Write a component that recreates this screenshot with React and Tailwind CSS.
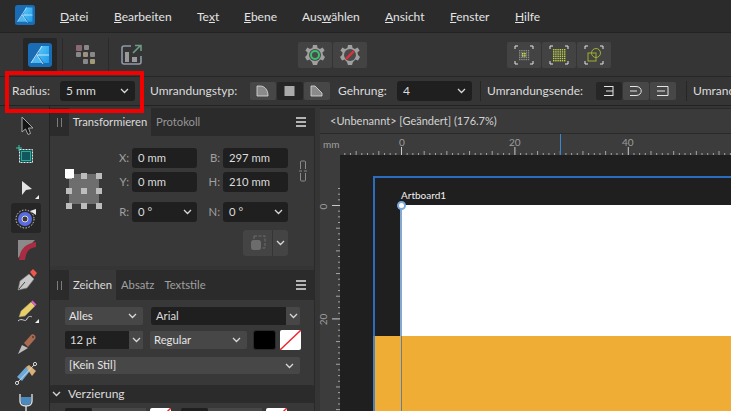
import React from "react";

const Chevron = ({ className = "" }) => (
  <svg width="9" height="6" viewBox="0 0 9 6" className={`shrink-0 ${className}`}>
    <path d="M1 1 L4.5 4.5 L8 1" fill="none" stroke="#d8d8d8" strokeWidth="1.3" />
  </svg>
);

const Logo = ({ size }) => (
  <svg width={size} height={size} viewBox="0 0 24 24">
    <defs>
      <linearGradient id="lg" x1="0" y1="0" x2="1" y2="1">
        <stop offset="0" stopColor="#5cc8f8" />
        <stop offset="1" stopColor="#1f9be8" />
      </linearGradient>
    </defs>
    <rect width="24" height="24" rx="3" fill="#1a6cb4" />
    <path d="M13 3 H21 V20 H16 L10 12 Z" fill="url(#lg)" />
    <path d="M3 20 L9 12 L14 20 Z" fill="#4db8f2" />
    <path d="M3 20 L14 3 M9 12 L21 12 M9 12 L15 21" stroke="#cfeeff" strokeWidth="0.9" fill="none" />
  </svg>
);

const Select = ({ label, className = "" }) => (
  <div className={`flex shrink-0 items-center justify-between rounded-[3px] bg-[#1f1f1f] pl-[6px] pr-[6px] text-[#dcdcdc] ${className}`}>
    <span>{label}</span>
    <Chevron />
  </div>
);

const GreySelect = ({ label, className = "" }) => (
  <div className={`flex shrink-0 items-center justify-between rounded-[2px] bg-[#474747] pl-[4px] pr-[6px] text-[#e6e6e6] ${className}`}>
    <span>{label}</span>
    <Chevron />
  </div>
);

const Gear = ({ children }) => (
  <svg width="22" height="22" viewBox="0 0 22 22">
    <path d="M9 1 H13 L13.6 4 L16 5 L18.6 3.4 L20.6 6.4 L18.4 8.4 L19 11 L21 13 L19 16.4 L16.4 15.6 L14 18 L13 21 H9 L8 18 L5.6 15.6 L3 16.4 L1 13 L3 11 L3.6 8.4 L1.4 6.4 L3.4 3.4 L6 5 L8.4 4 Z" fill="#a0a0a0" />
    <circle cx="11" cy="11" r="6" fill="#4a4a4a" />
    {children}
  </svg>
);

const Frame = ({ children }) => (
  <svg width="20" height="20" viewBox="0 0 20 20">
    <path d="M1 4 V1 H4 M16 1 H19 V4 M19 16 V19 H16 M4 19 H1 V16" fill="none" stroke="#e6e6e6" strokeWidth="1" />
    {children}
  </svg>
);

const dots = (n, start, step, color) => {
  const out = [];
  for (let i = 0; i < n; i++) {
    for (let j = 0; j < n; j++) {
      out.push(<rect key={i + "-" + j} x={start + i * step} y={start + j * step} width="1.4" height="1.4" fill={color} />);
    }
  }
  return out;
};

const ToolButton = ({ children, active }) => (
  <div className={`mb-px flex h-[30px] w-[30px] items-center justify-center rounded-[3px] ${active ? "bg-[#262626]" : ""}`}>
    <svg width="30" height="30" viewBox="0 0 30 30">{children}</svg>
  </div>
);

const Corner = () => <path d="M24 27 L28 23 V27 Z" fill="#f0f0f0" />;

const Tools = () => (
  <div className="w-[50px] shrink-0 border-r border-[#232323] pl-[11px] pt-[4px]">
    <ToolButton>
      <path d="M11 7 L11 22 L14.5 19 L17 24.5 L19.5 23.5 L17.5 18 L22 18 Z" fill="#141414" stroke="#a8a8a8" strokeWidth="1" />
    </ToolButton>
    <ToolButton>
      <rect x="8.5" y="8.5" width="13" height="13" fill="#11585c" stroke="#e8e8e8" strokeDasharray="2 1" />
      <rect x="10.5" y="10.5" width="9" height="9" fill="none" stroke="#36a89a" />
      <path d="M8 4 V10 M5 7 H11" stroke="#38c8a8" strokeWidth="1" />
    </ToolButton>
    <ToolButton>
      <path d="M11 9 L21 17 L15 18 L11 23 Z" fill="#e4e4e4" />
      <Corner />
    </ToolButton>
    <ToolButton active>
      <circle cx="14" cy="16" r="9" fill="none" stroke="#d8d8d8" strokeDasharray="1.5 1.5" />
      <circle cx="14" cy="16" r="7" fill="#5a6be0" />
      <circle cx="14" cy="16" r="3" fill="#3a3a3a" stroke="#d8d8d8" />
      <path d="M19 8 L25 6 V12 Z" fill="#e8e8e8" />
    </ToolButton>
    <ToolButton>
      <path d="M7 6 H24 L7 24 Z" fill="#8a8a8a" />
      <path d="M8 26 C9 15 14 10 25 8 V13 C18 14 15 18 14 26 Z" fill="#a82c42" />
    </ToolButton>
    <ToolButton>
      <path d="M7 25 L9 16 L18 9 L23 14 L16 23 Z" fill="#c8c8c8" stroke="#808080" strokeWidth="0.6" />
      <path d="M8 24 L14 17" stroke="#444" strokeWidth="1" />
      <path d="M19 7 L22 4 L26 8 L23 12 Z" fill="#f0574a" />
    </ToolButton>
    <ToolButton>
      <path d="M8 21 L10 15 L20 6 L24 10 L14 20 Z" fill="#e8cf6a" stroke="#8c8c70" strokeWidth="0.5" />
      <path d="M20 6 L21.5 4.5 L25.5 8.5 L24 10 Z" fill="#e060c8" />
      <path d="M7 25 C11 21 14 27 16 23 C17 20 20 20 21 21" fill="none" stroke="#d0d0d0" strokeWidth="1" />
      <Corner />
    </ToolButton>
    <ToolButton>
      <path d="M7 27 L11 18 L17 21 Z" fill="#bcbcbc" />
      <path d="M13 16 L20 8 C22 6 26 9 24 12 L17 20 Z" fill="#a86a50" />
      <circle cx="22" cy="10" r="1" fill="#5a3a2c" />
    </ToolButton>
    <ToolButton>
      <path d="M6 19 L15 9 L19 13 L11 23 Z" fill="#6aa8d8" />
      <path d="M15 9 L18 7 L25 13 L21 18 Z" fill="#d8b078" />
      <path d="M6 25 L24 6" stroke="#d8d8d8" strokeWidth="1" />
      <circle cx="6" cy="25" r="1.6" fill="#333" stroke="#d8d8d8" />
      <circle cx="24" cy="6" r="1.6" fill="#333" stroke="#d8d8d8" />
    </ToolButton>
    <ToolButton>
      <path d="M9 5 V12 C9 16 12 17 15 17 C18 17 21 16 21 12 V5" fill="none" stroke="#dcdcdc" strokeWidth="1.4" />
      <path d="M10 8 H20 V12 C20 15 18 16 15 16 C12 16 10 15 10 12 Z" fill="#4a88c0" />
      <path d="M15 17 V26" stroke="#dcdcdc" strokeWidth="1.4" />
    </ToolButton>
  </div>
);

const Grip = () => <span className="ml-[7px] mr-[7px] h-[9px] w-[5px] shrink-0 border-x border-[#7c7c7c]" />;

const Burger = () => (
  <div className="ml-auto mr-[8px] flex w-[10px] flex-col gap-[2px]">
    <span className="h-[2px] bg-[#b4b4b4]" />
    <span className="h-[2px] bg-[#b4b4b4]" />
    <span className="h-[2px] bg-[#b4b4b4]" />
  </div>
);

const Field = ({ label, value, chevron }) => (
  <div className="flex items-center">
    <span className="w-[22px] pr-[3px] text-right text-[#a0a0a0]">{label}</span>
    <div className="flex h-[20px] w-[65px] items-center justify-between rounded-[3px] bg-[#1f1f1f] pl-[6px] pr-[5px] text-[#dcdcdc]">
      <span>{value}</span>
      {chevron && <Chevron />}
    </div>
  </div>
);

const AnchorGrid = () => (
  <svg width="40" height="40" viewBox="0 0 40 40">
    <rect x="4" y="5" width="30" height="30" fill="#6e6e6e" />
    {[4, 19, 34].map((y) =>
      [4, 19, 34].map((x) => <rect key={x + "-" + y} x={x - 3} y={y} width="6" height="6" fill="#bdbdbd" />)
    )}
    <rect x="0" y="0" width="9" height="9" fill="#ffffff" />
  </svg>
);

const TransformPanel = () => (
  <div className="h-[158px] bg-[#383838]">
    <div className="flex h-[28px] items-center bg-[#2b2b2b]">
      <Grip />
      <div className="flex h-full w-[82px] items-center justify-center bg-[#383838] text-[#dcdcdc]">Transformieren</div>
      <span className="ml-[5px] text-[#969696]">Protokoll</span>
      <Burger />
    </div>
    <div className="relative flex pl-[15px] pt-[12px]">
      <div className="mt-[21px] w-[45px]">
        <AnchorGrid />
      </div>
      <div className="flex flex-col">
        <div className="flex gap-[4px]"><Field label="X:" value="0 mm" /><Field label="B:" value="297 mm" /></div>
        <div className="mt-[4px] flex gap-[4px]"><Field label="Y:" value="0 mm" /><Field label="H:" value="210 mm" /></div>
        <div className="mt-[10px] flex gap-[4px]"><Field label="R:" value="0 °" chevron /><Field label="N:" value="0 °" chevron /></div>
        <div className="ml-[133px] mt-[8px] flex h-[26px] w-[45px] overflow-hidden rounded-[3px] bg-[#444444]">
          <div className="flex w-[30px] items-center justify-center border-r border-[#353535]">
            <svg width="18" height="16" viewBox="0 0 18 16">
              <path d="M5 1 H16 V13 H13 M5 1 V4" fill="none" stroke="#6c6c6c" strokeDasharray="3 1.5" />
              <rect x="2" y="5" width="10" height="10" rx="2.5" fill="#6c6c6c" />
            </svg>
          </div>
          <div className="flex flex-1 items-center justify-center"><Chevron /></div>
        </div>
      </div>
      <svg width="8" height="22" viewBox="0 0 8 22" className="ml-[11px] mt-[12px]">
        <path d="M1.5 9 V2 Q1.5 1 2.5 1 H5.5 Q6.5 1 6.5 2 V9 M1.5 13 V20 Q1.5 21 2.5 21 H5.5 Q6.5 21 6.5 20 V13 M0 11 H3 M5 11 H8" fill="none" stroke="#8a8a8a" />
      </svg>
    </div>
  </div>
);

const NoFill = ({ className = "" }) => (
  <svg viewBox="0 0 21 20" className={`shrink-0 ${className}`}>
    <rect width="21" height="20" rx="2" fill="#ffffff" />
    <path d="M0 20 L21 0" stroke="#f0222c" strokeWidth="1.4" />
  </svg>
);

const CharPanel = () => (
  <div className="mt-[4px] bg-[#383838]">
    <div className="flex h-[30px] items-center bg-[#2b2b2b]">
      <Grip />
      <div className="flex h-full w-[47px] items-center justify-center bg-[#383838] text-[#dcdcdc]">Zeichen</div>
      <span className="ml-[5px] text-[#a0a0a0]">Absatz</span>
      <span className="ml-[10px] text-[#a0a0a0]">Textstile</span>
      <Burger />
    </div>
    <div className="pl-[15px] pt-[7px]">
      <div className="flex h-[18px]">
        <GreySelect label="Alles" className="w-[78px]" />
        <div className="ml-[8px] flex w-[135px] items-center rounded-l-[3px] bg-[#1f1f1f] pl-[5px] text-[#dcdcdc]">Arial</div>
        <div className="flex w-[14px] items-center justify-center rounded-r-[2px] bg-[#474747]"><Chevron /></div>
      </div>
      <div className="mt-[5px] flex h-[20px] items-center">
        <div className="flex h-[18px] w-[64px] items-center rounded-l-[2px] bg-[#1f1f1f] pl-[5px] text-[#dcdcdc]">12 pt</div>
        <div className="flex h-[18px] w-[14px] items-center justify-center bg-[#474747]"><Chevron /></div>
        <GreySelect label="Regular" className="ml-[7px] h-[18px] w-[97px]" />
        <div className="ml-[6px] h-[20px] w-[23px] rounded-[3px] border border-[#2a2a2a] bg-black" />
        <NoFill className="ml-[4px] h-[20px] w-[21px]" />
      </div>
      <GreySelect label="[Kein Stil]" className="mt-[7px] h-[17px] w-[235px]" />
    </div>
    <div className="mt-[11px] flex h-[18px] items-center rounded-t-[2px] bg-[#2b2b2b] text-[#dcdcdc]">
      <Chevron className="ml-[2px] mr-[6px]" />
      <span className="ml-[1px] text-[12px]">Verzierung</span>
    </div>
    <div className="flex h-[20px] items-start pl-[15px] pt-[5px]">
      <div className="h-[10px] w-[27px] rounded-t-[2px] bg-[#1f1f1f]" />
      <div className="h-[10px] w-[27px] bg-[#474747]" />
      <div className="h-[10px] w-[27px] bg-[#474747]" />
      <NoFill className="ml-[4px] h-[20px] w-[21px]" />
      <div className="ml-[10px] h-[10px] w-[27px] rounded-t-[2px] bg-[#1f1f1f]" />
      <div className="h-[10px] w-[27px] bg-[#474747]" />
      <div className="h-[10px] w-[27px] bg-[#474747]" />
      <NoFill className="ml-[4px] h-[20px] w-[21px]" />
    </div>
  </div>
);

const mm = 5.67;

const TopRuler = () => {
  const ticks = [];
  for (let i = -10; i < 60; i++) {
    const x = 81 + i * mm;
    const h = i % 20 === 0 ? 8 : i % 4 === 0 ? 4 : 2;
    ticks.push(<rect key={i} x={x} y={21 - h} width="1" height={h} fill={i % 20 === 0 ? "#c8c8c8" : "#a4a4a4"} />);
  }
  return (
    <svg width="411" height="21" viewBox="0 0 411 21" className="block bg-[#3c3c3c]">
      {ticks}
      <rect x="240" y="0" width="1" height="21" fill="#3a86d0" />
    </svg>
  );
};

const LeftRuler = () => {
  const ticks = [];
  for (let i = -3; i < 40; i++) {
    const y = 50 + i * mm;
    const h = i % 20 === 0 ? 8 : i % 4 === 0 ? 4 : 2;
    ticks.push(<rect key={i} x={20 - h} y={y} width={h} height="1" fill={i % 20 === 0 ? "#c8c8c8" : "#a4a4a4"} />);
  }
  return (
    <svg width="20" height="256" viewBox="0 0 20 256" className="block shrink-0 bg-[#3c3c3c]">
      {ticks}
    </svg>
  );
};

const Canvas = () => (
  <div className="flex min-w-0 flex-1 flex-col">
    <div className="mt-[2px] flex h-[26px] items-center border-y border-[#2a2a2a] bg-[#3a3a3a] pl-[10px] text-[11px] text-[#d4d4d4]">
      {"<Unbenannt> [Geändert] (176.7%)"}
    </div>
    <div className="relative h-[21px]">
      <TopRuler />
      <span className="absolute left-[3px] top-[3px] text-[10px] text-[#a0a0a0]">mm</span>
      <span className="absolute left-[79px] top-[1px] text-[10px] text-[#9c9c9c]">0</span>
      <span className="absolute left-[189px] top-[1px] text-[10px] text-[#9c9c9c]">20</span>
      <span className="absolute left-[302px] top-[1px] text-[10px] text-[#9c9c9c]">40</span>
    </div>
    <div className="flex flex-1">
      <div className="relative w-[20px]">
        <LeftRuler />
        <span className="absolute left-[1px] top-[44px] -rotate-90 text-[10px] text-[#9c9c9c]">0</span>
        <span className="absolute left-[-2px] top-[157px] -rotate-90 text-[10px] text-[#9c9c9c]">20</span>
      </div>
      <div className="relative flex-1 overflow-hidden bg-[#1f1f1f]">
        <div className="absolute left-[33px] top-[21px] h-[300px] w-[400px] border-l-2 border-t-2 border-[#2a6cc0]" />
        <div className="absolute left-[34px] top-[181px] h-[80px] w-[400px] bg-[#f0ad35]" />
        <div className="absolute left-[33px] top-[181px] h-[80px] w-[2px] bg-[#4f80b8]" />
        <div className="absolute left-[60px] top-[50px] h-[131px] w-[400px] border-l-2 border-[#85a8d0] bg-white" />
        <div className="absolute left-[61px] top-[181px] h-[80px] w-px bg-[#5f7f9f]" />
        <div className="absolute left-[57px] top-[46px] h-[9px] w-[9px] rounded-full border-2 border-[#7aa8e0] bg-white" />
        <span className="absolute left-[61px] top-[33px] text-[10px] leading-[14px] text-[#f0f0f0]">Artboard1</span>
      </div>
    </div>
  </div>
);

const SegButton = ({ active, children }) => (
  <div className={`flex h-[18px] w-[26px] shrink-0 items-center justify-center rounded-[2px] ${active ? "bg-[#262626]" : "bg-[#474747]"}`}>
    <svg width="14" height="12" viewBox="0 0 14 12">{children}</svg>
  </div>
);

const ActionButton = ({ children }) => (
  <div className="flex h-[26px] w-[34px] items-center justify-center rounded-[2px] bg-[#434343]">{children}</div>
);

export default function App() {
  return (
    <div className="relative h-[411px] w-[731px] overflow-hidden bg-[#353535] text-[11.25px] font-['Lato',sans-serif]">
      {/* Menu */}
      <div className="flex h-[33px] items-center border-b border-[#232323] bg-[#2b2b2b] pt-px text-[12px] text-[#e4e4e4]">
        <div className="ml-[15px] mb-[3px] w-[45px]"><Logo size={20} /></div>
        <span className="w-[54px]"><u>D</u>atei</span>
        <span className="w-[83px]"><u>B</u>earbeiten</span>
        <span className="w-[47px]">Te<u>x</u>t</span>
        <span className="w-[58px]"><u>E</u>bene</span>
        <span className="w-[83px]">Aus<u>w</u>ählen</span>
        <span className="w-[65px]"><u>A</u>nsicht</span>
        <span className="w-[65px]"><u>F</u>enster</span>
        <span><u>H</u>ilfe</span>
      </div>

      {/* Toolbar */}
      <div className="flex h-[44px] items-center border-b border-[#262626]">
        <div className="ml-[23px] flex h-[34px] w-[34px] items-center justify-center rounded-[2px] bg-[#262626]"><Logo size={24} /></div>
        <span className="ml-[5px] h-[34px] w-px bg-[#2a2a2a]" />
        <svg width="22" height="22" viewBox="0 0 22 22" className="ml-[12px]">
          <rect x="1" y="1" width="6" height="6" rx="1" fill="#8a6a70" />
          <rect x="9" y="1" width="5" height="5" rx="1" fill="#888" />
          <rect x="1" y="8" width="5" height="5" rx="1" fill="#888" />
          <rect x="8" y="8" width="5" height="5" rx="1" fill="#a09080" />
          <rect x="15" y="8" width="5" height="5" rx="1" fill="#888" />
          <rect x="8" y="15" width="5" height="5" rx="1" fill="#888" />
          <rect x="15" y="15" width="5" height="5" rx="1" fill="#a09a78" />
        </svg>
        <span className="ml-[11px] h-[34px] w-px bg-[#2a2a2a]" />
        <svg width="22" height="22" viewBox="0 0 22 22" className="ml-[12px]">
          <path d="M10 2 H3 Q1 2 1 4 V18 Q1 20 3 20 H18 Q20 20 20 18 V12" fill="none" stroke="#9098a8" strokeWidth="1.6" />
          <rect x="4" y="8" width="4" height="10" fill="#9a9a9a" />
          <rect x="11" y="13" width="5" height="5" fill="#9a9a9a" />
          <path d="M12 9 L19 2 M14 1.5 H20 V7" fill="none" stroke="#6f9a88" strokeWidth="1.6" />
        </svg>
        <div className="ml-[155px] flex gap-px">
          <ActionButton>
            <Gear>
              <circle cx="11" cy="11" r="4" fill="none" stroke="#3cc070" strokeWidth="2" />
            </Gear>
          </ActionButton>
          <ActionButton>
            <Gear>
              <path d="M7 15 L15 7" stroke="#e0303c" strokeWidth="2.4" />
            </Gear>
          </ActionButton>
        </div>
        <div className="ml-[140px] flex gap-px">
          <ActionButton>
            <Frame>
              {dots(5, 5, 2.2, "#8a8a8a")}
              {dots(2, 8, 2.2, "#d8f030")}
            </Frame>
          </ActionButton>
          <ActionButton>
            <Frame>{dots(6, 4, 2.2, "#c0d040")}</Frame>
          </ActionButton>
          <ActionButton>
            <Frame>
              <circle cx="12" cy="8" r="4.5" fill="none" stroke="#a0b030" />
              <rect x="4" y="8" width="8" height="8" fill="none" stroke="#a0b030" />
            </Frame>
          </ActionButton>
        </div>
      </div>

      {/* Context bar */}
      <div className="flex h-[29px] items-center whitespace-nowrap border-b border-[#232323] text-[12px] text-[#dcdcdc]">
        <span className="ml-[12px] w-[48px] shrink-0">Radius:</span>
        <Select label="5 mm" className="h-[20px] w-[75px]" />
        <span className="ml-[15px] w-[100px] shrink-0">Umrandungstyp:</span>
        <div className="flex gap-px">
          <SegButton><path d="M1 11 V1 H4 C9 1 12 5 12 11 Z" fill="#8a8a8a" stroke="#e0e0e0" strokeWidth="0.8" /></SegButton>
          <SegButton active><rect x="1.5" y="1" width="10" height="10" fill="#aaaaaa" /></SegButton>
          <SegButton><path d="M1 11 V1 H5 L12 8 V11 Z" fill="#8a8a8a" stroke="#e0e0e0" strokeWidth="0.8" /></SegButton>
        </div>
        <span className="ml-[8px] w-[59px] shrink-0">Gehrung:</span>
        <Select label="4" className="h-[20px] w-[75px]" />
        <span className="ml-[8px] h-[20px] w-px shrink-0 bg-[#262626]" />
        <span className="ml-[6px] w-[109px] shrink-0">Umrandungsende:</span>
        <div className="flex gap-px">
          <SegButton active><path d="M2 1.5 H11 M4 6 H11 M2 10.5 H11 M11 1 V11" fill="none" stroke="#e4e4e4" /></SegButton>
          <SegButton><path d="M1 1.5 H7 C14 1.5 14 10.5 7 10.5 H1 M1 6 H8" fill="none" stroke="#e4e4e4" /></SegButton>
          <SegButton><path d="M1 1.5 H12 V10.5 H1 M1 6 H9" fill="none" stroke="#e4e4e4" /></SegButton>
        </div>
        <span className="ml-[10px] h-[20px] w-px shrink-0 bg-[#262626]" />
        <span className="ml-[6px] shrink-0">Umrand</span>
      </div>

      {/* Body */}
      <div className="flex h-[305px]">
        <Tools />
        <div className="mt-[2px] w-[265px] shrink-0 whitespace-nowrap border-r border-[#2a2a2a]">
          <TransformPanel />
          <CharPanel />
        </div>
        <div className="w-[5px] shrink-0" />
        <Canvas />
      </div>

      {/* Red marker */}
      <div className="absolute left-[5px] top-[71px] h-[42px] w-[139px] border-[4px] border-[#f50000]" />
    </div>
  );
}
